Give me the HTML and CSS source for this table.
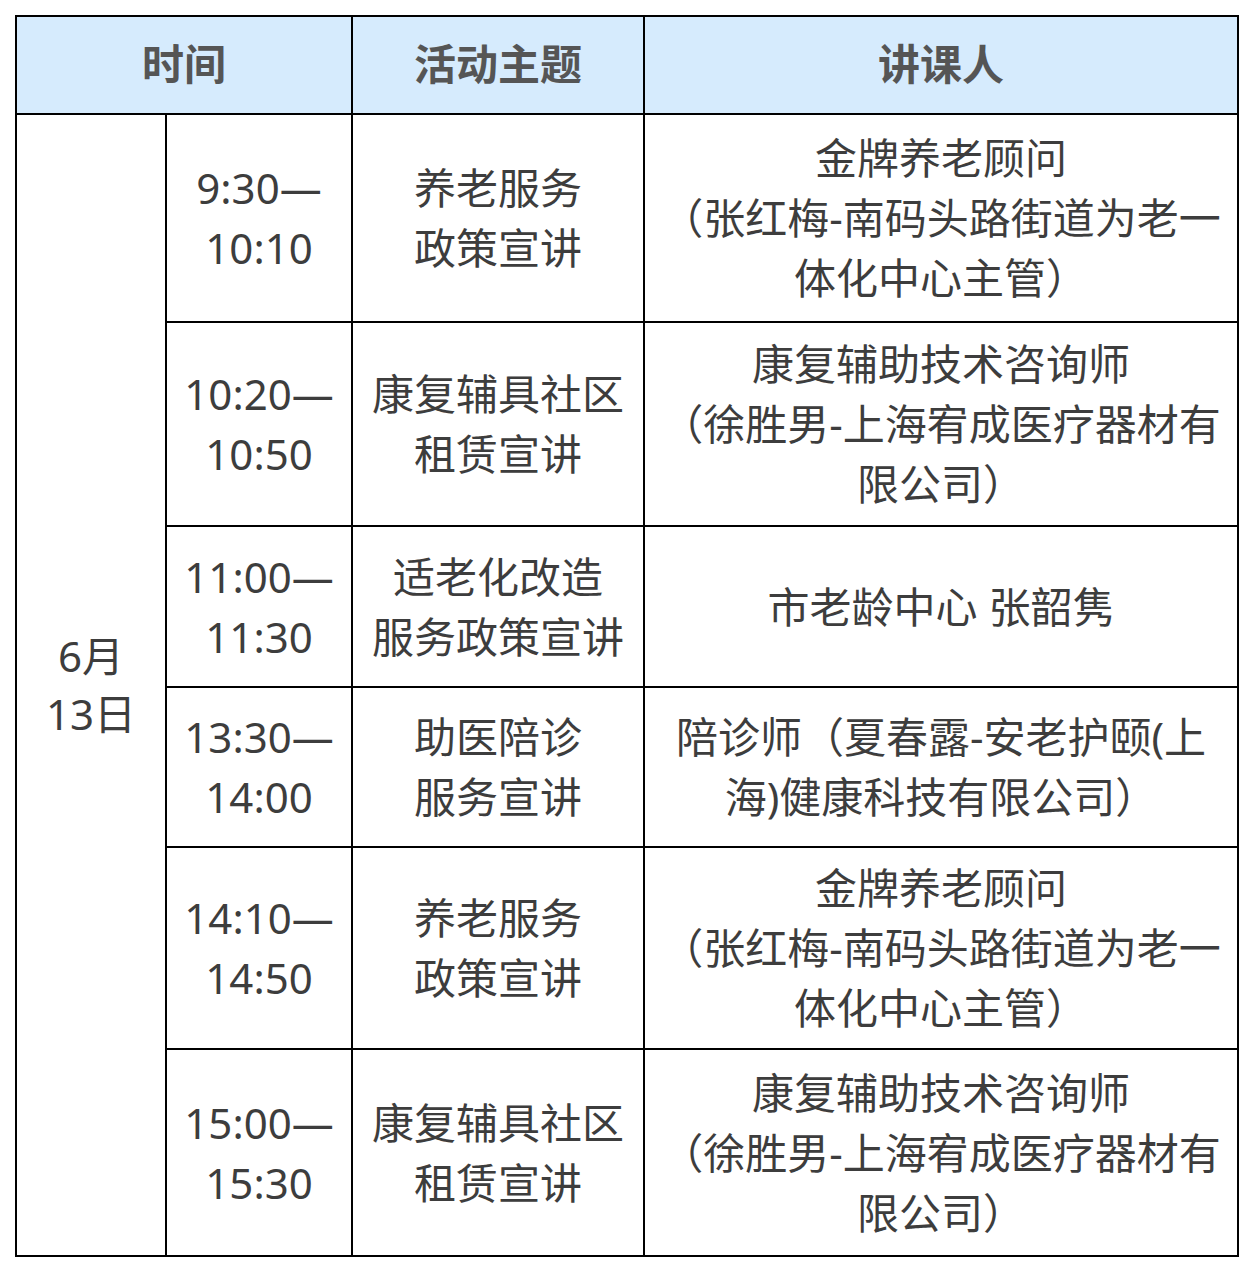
FILE: index.html
```html
<!DOCTYPE html>
<html lang="zh-CN">
<head>
<meta charset="utf-8">
<title>活动安排</title>
<link rel="stylesheet" href="styles.css">
</head>
<body>
<table class="schedule">
  <colgroup>
    <col class="c-date">
    <col class="c-time">
    <col class="c-topic">
    <col class="c-speaker">
  </colgroup>
  <thead>
    <tr class="head-row">
      <th colspan="2">时间</th>
      <th>活动主题</th>
      <th>讲课人</th>
    </tr>
  </thead>
  <tbody>
    <tr class="r1">
      <td class="date" rowspan="6">6月<br>13日</td>
      <td>9:30—<br>10:10</td>
      <td>养老服务<br>政策宣讲</td>
      <td>金牌养老顾问<br>（张红梅-南码头路街道为老一<br>体化中心主管）</td>
    </tr>
    <tr class="r2">
      <td>10:20—<br>10:50</td>
      <td>康复辅具社区<br>租赁宣讲</td>
      <td>康复辅助技术咨询师<br>（徐胜男-上海宥成医疗器材有<br>限公司）</td>
    </tr>
    <tr class="r3">
      <td>11:00—<br>11:30</td>
      <td>适老化改造<br>服务政策宣讲</td>
      <td>市老龄中心 张韶隽</td>
    </tr>
    <tr class="r4">
      <td>13:30—<br>14:00</td>
      <td>助医陪诊<br>服务宣讲</td>
      <td>陪诊师（夏春露-安老护颐(上<br>海)健康科技有限公司）</td>
    </tr>
    <tr class="r5">
      <td>14:10—<br>14:50</td>
      <td>养老服务<br>政策宣讲</td>
      <td>金牌养老顾问<br>（张红梅-南码头路街道为老一<br>体化中心主管）</td>
    </tr>
    <tr class="r6">
      <td>15:00—<br>15:30</td>
      <td>康复辅具社区<br>租赁宣讲</td>
      <td>康复辅助技术咨询师<br>（徐胜男-上海宥成医疗器材有<br>限公司）</td>
    </tr>
  </tbody>
</table>
</body>
</html>
```
FILE: styles.css
```css
html, body {
  margin: 0;
  padding: 0;
  background: #ffffff;
}
body {
  padding: 15px 0 0 15px;
}
.schedule {
  border-collapse: collapse;
  table-layout: fixed;
  width: 1222px;
  font-family: "Noto Sans", "Noto Sans CJK SC", sans-serif;
  font-size: 42px;
  line-height: 60px;
  color: #3d3d3d;
}
.c-date { width: 150px; }
.c-time { width: 186px; }
.c-topic { width: 292px; }
.c-speaker { width: 594px; }
.schedule th,
.schedule td {
  border: 2px solid #000000;
  padding: 0;
  text-align: center;
  vertical-align: middle;
  white-space: nowrap;
}
.schedule th {
  background: #d6ebfd;
  color: #555555;
  font-weight: 700;
  font-family: "Noto Sans CJK SC", sans-serif;
  padding-bottom: 6px;
}
.head-row { height: 98px; }
.r1 { height: 208px; }
.r2 { height: 204px; }
.r3 { height: 161px; }
.r4 { height: 160px; }
.r5 { height: 202px; }
.r6 { height: 207px; }
.schedule td.date {
  line-height: 58px;
}
```
